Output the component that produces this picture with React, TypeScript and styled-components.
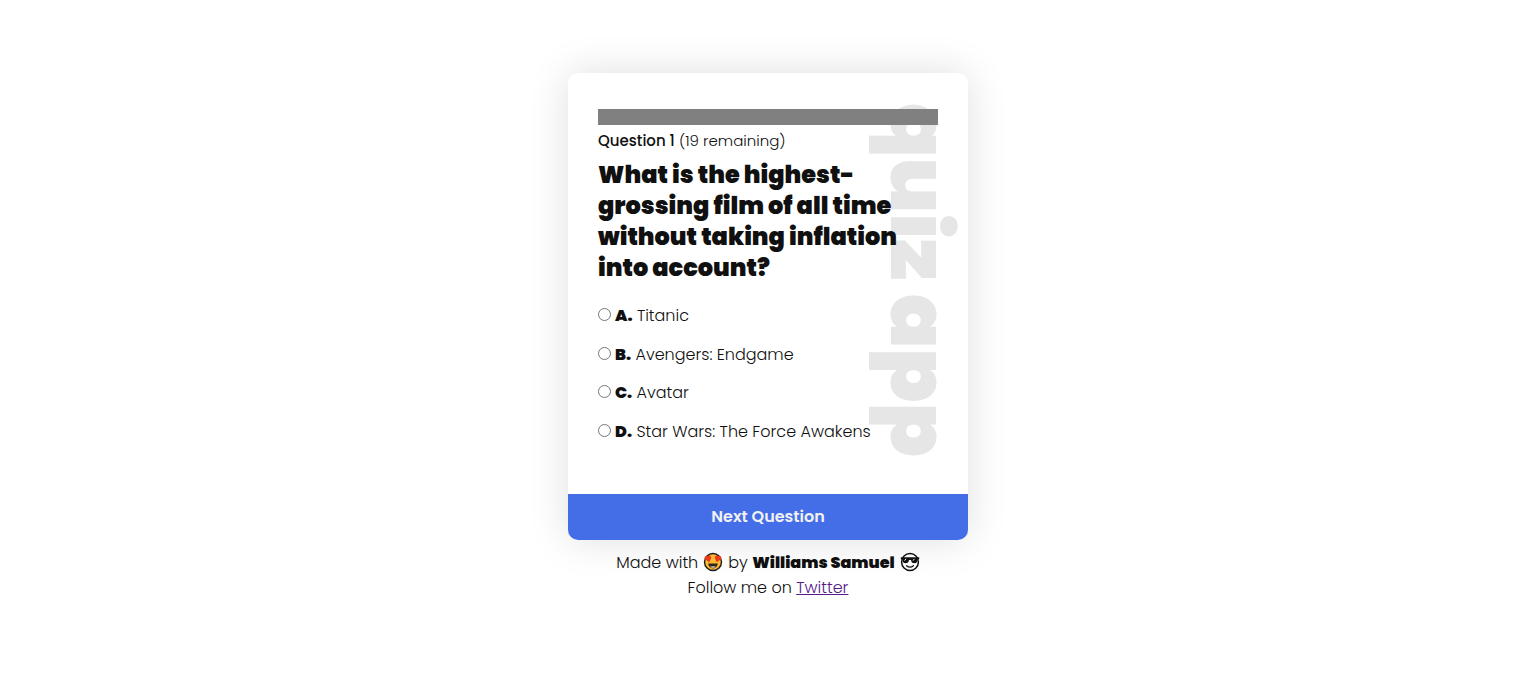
import React, { useState } from "react";
import styled, { createGlobalStyle } from "styled-components";

const GlobalStyle = createGlobalStyle`
  *, *::before, *::after { box-sizing: border-box; }
  body {
    margin: 0;
    background: #fff;
    color: #101010;
    font-family: Poppins, Inter, "Liberation Sans", sans-serif;
    font-size: 16px;
    font-weight: 300;
  }
`;

const Page = styled.div`
  display: flex;
  flex-direction: column;
  align-items: center;
  justify-content: center;
  min-height: 100vh;
`;

const Card = styled.form`
  position: relative;
  isolation: isolate;
  width: 100%;
  max-width: 400px;
  border-radius: 10px;
  overflow: hidden;
  background: #fff;
  box-shadow: 0 0 40px rgba(0, 0, 0, 0.13);
`;

const Watermark = styled.div`
  position: absolute;
  z-index: -1;
  top: 30px;
  right: 4px;
  writing-mode: vertical-rl;
  font-size: 80px;
  font-weight: 900;
  line-height: 90px;
  white-space: nowrap;
  color: #e6e6e6;
`;

const Body = styled.div`
  padding: 36px 30px 43px;
`;

const Progress = styled.div`
  height: 16px;
  background: gray;
`;

const Counter = styled.p`
  margin: 3px 0 0;
  font-size: 15px;
  line-height: 26px;

  strong { font-weight: 500; }
`;

const Title = styled.h1`
  margin: 5px 0 14px;
  font-size: 24px;
  font-weight: 900;
  line-height: 31px;
`;

const Options = styled.div`
  display: grid;
  min-height: 154px;
`;

const Option = styled.label`
  display: flex;
  align-items: center;
  gap: 4px;

  strong { font-weight: 900; }
`;

const Radio = styled.input`
  flex: none;
  width: 13px;
  height: 13px;
  margin: 0 0 2px;
`;

const NextButton = styled.button`
  display: block;
  width: 100%;
  padding: 10px;
  border: 0;
  background: #446ee7;
  color: #f1f1f1;
  font: inherit;
  font-weight: 600;
  line-height: 26px;
  cursor: pointer;
`;

const Footer = styled.footer`
  padding: 10px 0 2px;
  text-align: center;
  line-height: 25px;

  strong { font-weight: 900; }
  a { color: #551a8b; }
`;

const FooterLine = styled.div`
  display: flex;
  align-items: center;
  justify-content: center;
  gap: 5px;
`;

const Face = styled.svg`
  flex: none;
  width: 20px;
  height: 20px;
`;

const HeartEyes = () => (
  <Face viewBox="0 0 20 20" role="img" aria-label="heart eyes">
    <circle cx="10" cy="10" r="8.5" fill="#ffbd35" stroke="#1c1c1c" strokeWidth="1.4" />
    <path d="M6.3 10.2 2.4 7.6C.6 5.8 2.2 3.2 4.6 4.2 6.2 2.4 8.8 4 8 6.4Z" fill="#f03a17" />
    <path d="M13.7 10.2 17.6 7.6C19.4 5.8 17.8 3.2 15.4 4.2 13.8 2.4 11.2 4 12 6.4Z" fill="#f03a17" />
    <path d="M5.2 11.6h9.6c-.3 3-2.2 4.8-4.8 4.8s-4.5-1.8-4.8-4.8Z" fill="#33251a" />
    <path d="M7 14.6c1.6-.9 4.4-.9 6 0-.8 1.2-1.7 1.7-3 1.7s-2.2-.5-3-1.7Z" fill="#b9a99a" />
  </Face>
);

const Sunglasses = () => (
  <Face viewBox="0 0 20 20" role="img" aria-label="sunglasses">
    <circle cx="10" cy="10" r="8.4" fill="#fff" stroke="#111" strokeWidth="1.5" />
    <path d="M.8 5.2h18.4v2l-1.6.5c-.2 2.5-1.2 3.5-3.3 3.5-2 0-2.9-1.1-3.3-3.3H9c-.4 2.2-1.3 3.3-3.3 3.3-2.1 0-3.1-1-3.3-3.5L.8 7.2Z" fill="#111" />
    <path d="m4.6 8.6 1.4-1.7M13 8.6l1.4-1.7" stroke="#fff" strokeWidth="1" />
    <path d="M6.6 13.7c2 1.7 4.8 1.7 6.8 0" fill="none" stroke="#111" strokeWidth="1.3" strokeLinecap="round" />
  </Face>
);

const answers = [
  { key: "A", text: "Titanic" },
  { key: "B", text: "Avengers: Endgame" },
  { key: "C", text: "Avatar" },
  { key: "D", text: "Star Wars: The Force Awakens" },
];

export default function App() {
  const [selected, setSelected] = useState("");

  return (
    <>
      <GlobalStyle />
      <Page>
        <Card onSubmit={(event) => event.preventDefault()}>
          <Watermark aria-hidden="true">quiz app</Watermark>
          <Body>
            <Progress />
            <Counter>
              <strong>Question 1</strong> (19 remaining)
            </Counter>
            <Title>
              What is the highest-grossing film of all time without taking inflation into account?
            </Title>
            <Options role="radiogroup" aria-label="Answers">
              {answers.map(({ key, text }) => (
                <Option key={key}>
                  <Radio
                    type="radio"
                    name="answer"
                    value={key}
                    checked={selected === key}
                    onChange={() => setSelected(key)}
                  />
                  <span>
                    <strong>{key}.</strong> {text}
                  </span>
                </Option>
              ))}
            </Options>
          </Body>
          <NextButton type="submit">Next Question</NextButton>
        </Card>
        <Footer>
          <FooterLine>
            <span>Made with</span>
            <HeartEyes />
            <span>
              by <strong>Williams Samuel</strong>
            </span>
            <Sunglasses />
          </FooterLine>
          <div>
            Follow me on <a href="#twitter">Twitter</a>
          </div>
        </Footer>
      </Page>
    </>
  );
}
